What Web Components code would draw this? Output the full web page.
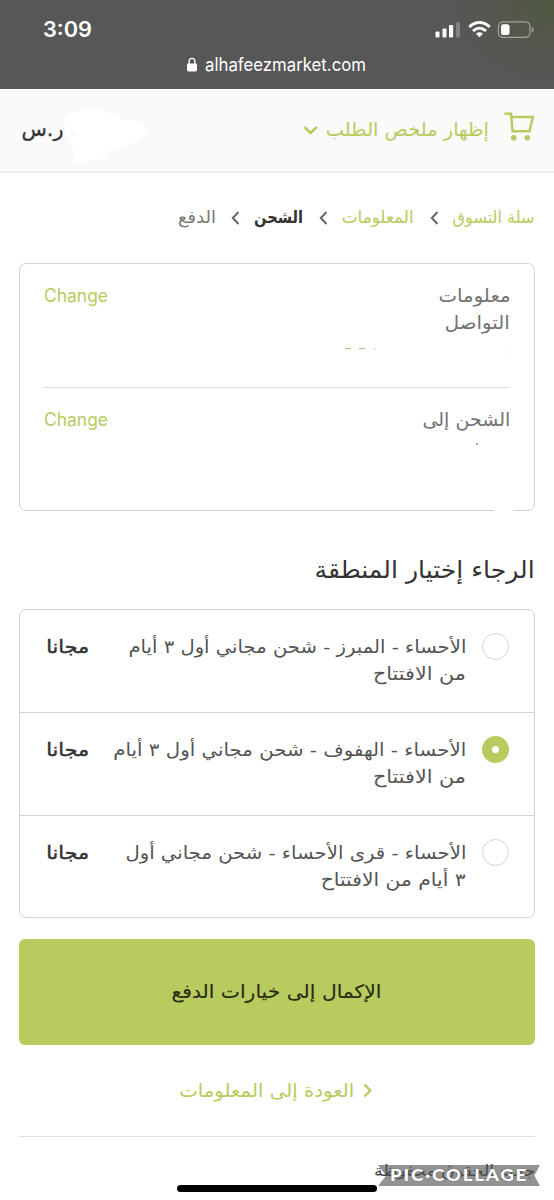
<!DOCTYPE html>
<html lang="ar" dir="rtl">
<head>
<meta charset="utf-8">
<title>الشحن</title>
<style>
html,body{margin:0;height:1200px;overflow:hidden;background:#fff}
body{font-family:"DejaVu Sans","Noto Sans",sans-serif;color:#555}
</style>
</head>
<body>
<checkout-page></checkout-page>
<script>
const define = (name, html, setup) => {
  const t = document.createElement('template');
  t.innerHTML = html;
  customElements.define(name, class extends HTMLElement {
    connectedCallback() {
      if (this.shadowRoot) return;
      this.attachShadow({mode:'open'}).append(t.content.cloneNode(true));
      if (setup) setup(this, this.shadowRoot);
    }
  });
};

/* One line of text condensed or widened to the width given in "w". */
define('fit-text', `<style>
:host{display:block;flex:none;white-space:nowrap;line-height:27px;height:27px}
span{display:inline-block;transform-origin:100% 50%}
:host([dir=ltr]) span{transform-origin:0 50%}
</style><span><slot></slot></span>`, (el, root) => {
  const w = +el.getAttribute('w');
  el.style.width = w + 'px';
  if (el.hasAttribute('size')) el.style.fontSize = el.getAttribute('size') + 'px';
  const s = root.querySelector('span');
  s.style.transform = 'scaleX(' + w / s.getBoundingClientRect().width + ')';
});

define('status-bar', `<style>
:host{display:block;height:88.5px;direction:ltr;color:#fff;font-family:Inter,sans-serif;
background:radial-gradient(ellipse 110px 90px at 100% 0,#50593f,#54574d 45%,#575757 100%)}
.top{display:flex;justify-content:space-between;align-items:center;padding:16px 18px 0 43px;height:27px}
.icons{display:block}
.url{display:flex;justify-content:center;align-items:center;gap:8px;height:27px;padding:8px 2px 0 0}
</style>
<div class="top"><fit-text dir="ltr" w="49" size="21.5" style="font-weight:600">3:09</fit-text>
<svg class="icons" width="101" height="20" viewBox="0 0 101 20"><g fill="#fff" transform="translate(0 -1)">
<rect x="0.500" y="12.500" width="4" height="6" rx="1"/><rect x="7.500" y="9.500" width="4" height="9" rx="1"/><rect x="14" y="6" width="4.200" height="12.500" rx="1"/><rect x="21" y="3" width="4" height="15.500" rx="1" opacity=".25"/></g>
<g transform="translate(0 -1)"><g fill="none" stroke="#fff" stroke-width="3"><path d="M34.300 8C40.500 1.900 48.500 1.900 54.700 8"/><path d="M38 12C42 8.300 47 8.300 51 12"/></g><path fill="#fff" d="M41 14.700Q44.500 11.900 48 14.700L44.500 18.300Z"/>
<rect x="63.500" y="2.800" width="31.500" height="15.500" rx="4.500" fill="none" stroke="#fff" stroke-opacity=".45" stroke-width="1.300"/><rect x="66" y="5.200" width="8.500" height="10.800" rx="2.300" fill="#fff"/><path fill="#fff" opacity=".45" d="M96.800 8v5.400q2-.8 2-2.700t-2-2.700z"/></g></svg></div>
<div class="url"><svg width="10" height="15" viewBox="0 0 10 15"><path d="M2.200 7V4.200a2.800 2.800 0 0 1 5.600 0V7" fill="none" stroke="#fff" stroke-width="1.400"/><rect y="6.400" width="10" height="8" rx="1.300" fill="#fff"/></svg>
<fit-text dir="ltr" w="161" size="18">alhafeezmarket.com</fit-text></div>`);

define('order-summary', `<style>
:host{display:flex;box-sizing:border-box;height:84.5px;align-items:flex-start;justify-content:space-between;background:#fafafa;border-bottom:2px solid #ececec;padding:23px 19px 0 21px}
.toggle{display:flex;color:#b8cb5e}
.cart{margin-inline-end:15px}
.chev{margin:13px 7px 0 0}
.total{display:flex;color:#333}
.smudge{margin-top:-5px}
</style>
<div class="toggle"><svg class="cart" width="31" height="30" viewBox="0 0 31 30"><g fill="none" stroke="#b8cb5e" stroke-width="2.500"><path d="M0.500 1.700H7L8.600 19.200H25.500L28.800 4.900H7.300"/></g><circle cx="9.700" cy="25.700" r="2.800" fill="#b8cb5e"/><circle cx="23.300" cy="25.700" r="2.800" fill="#b8cb5e"/></svg>
<fit-text w="163" size="19" style="margin-top:4px">إظهار ملخص الطلب</fit-text>
<svg class="chev" width="16" height="11" viewBox="0 0 16 11"><path d="M1.300 2 7.500 8 13.700 2" fill="none" stroke="#b8cb5e" stroke-width="2.500"/></svg></div>
<div class="total"><svg class="smudge" width="84" height="60" viewBox="0 0 84 60"><path fill="#fff" d="M2 14Q2 5 15 4Q32-2 47 6Q56 9 60 13Q82 11 83 23Q82 33 68 36L47 44Q42 51 34 53Q27 53 24 56Q12 60 10 49L9 34Q0 26 2 14Z"/><circle cx="9" cy="27" r=".7" fill="#ccc"/></svg>
<fit-text w="42" size="20" style="margin-top:4px;-webkit-text-stroke:.3px #333">ر.س</fit-text></div>`);

define('bread-crumbs', `<style>
:host{display:flex;color:#b8cb5e;padding:31px 19px 0 0;height:59px}
svg{margin-top:7px;flex:none}
.now{font-weight:700;color:#333}.next{color:#777}
</style>
<fit-text w="82" size="17">سلة التسوق</fit-text><svg style="margin-inline:14.5px 16px" width="9" height="14"><path d="M7.500 1 1.800 7l5.700 6" fill="none" stroke="#666" stroke-width="2"/></svg>
<fit-text w="72" size="17">المعلومات</fit-text><svg style="margin-inline:14px 15.5px" width="9" height="14"><path d="M7.500 1 1.800 7l5.700 6" fill="none" stroke="#666" stroke-width="2"/></svg>
<fit-text class="now" w="49" size="17">الشحن</fit-text><svg style="margin-inline:14.5px 14.5px" width="9" height="14"><path d="M7.500 1 1.800 7l5.700 6" fill="none" stroke="#666" stroke-width="2"/></svg>
<fit-text class="next" w="38" size="17">الدفع</fit-text>`);

define('review-row', `<style>
:host{display:flex;justify-content:space-between;box-sizing:border-box;height:124px;padding-top:18px;color:#737373}
.change{color:#b8cb5e;font-family:Inter,sans-serif}
</style><div><slot></slot></div><fit-text class="change" dir="ltr" w="64" size="18">Change</fit-text>`);

define('review-card', `<style>
:host{display:block;position:relative;box-sizing:border-box;margin:0 19px;height:248px;border:1px solid #d3d3d3;border-radius:7px;padding:0 24px}
.rule{border-bottom:1px solid #dcdcdc}
.erased{position:absolute;right:21px;bottom:-3px;width:19px;height:5px;border-radius:2px;background:#fff}
.dots{position:absolute;right:24px;top:82px}
</style>
<review-row class="rule"><fit-text w="72" size="18.5">معلومات</fit-text><fit-text w="65" size="18.5">التواصل</fit-text></review-row>
<review-row><fit-text w="88" size="18.5">الشحن إلى</fit-text></review-row>
<svg class="dots" width="170" height="100"><g fill="none" stroke-width="1.200"><path d="M5 3q3-1.500 6 0M19 3q3-1.500 6 0" stroke="#b5be7c"/><path d="M33 2.500h3" stroke="#ddd"/></g><circle cx="137" cy="98" r=".9" fill="#888"/><circle cx="168" cy="6" r=".5" fill="#ccc"/></svg>
<div class="erased"></div>`);

define('ship-option', `<style>
:host{display:flex;box-sizing:border-box;height:103px;padding:23px 25px 0 26px;border-bottom:1px solid #d3d3d3;color:#545454}
:host(:last-child){border-bottom:0}
i{box-sizing:border-box;flex:none;width:27px;height:27px;border:1.500px solid #d3d3d3;border-radius:50%;margin:0 0 0 16px}
:host([checked]) i{border:10.500px solid #b8cb5e;background:#fff}
.price{margin-inline-start:auto;color:#333;-webkit-text-stroke:.45px #333}
</style><i></i><div><slot></slot></div><fit-text class="price" w="43" size="18">مجانا</fit-text>`);

define('ship-options', `<style>
:host{display:block;box-sizing:border-box;margin:0 19px;height:309px;border:1px solid #d3d3d3;border-radius:7px}
</style><slot></slot>`);

define('pay-button', `<style>
:host{display:flex;justify-content:center;box-sizing:border-box;height:106px;margin:21px 19px 0;padding:39px 1px 0 0;border-radius:6px;background:#b8cb5e;color:#292d13}
</style><fit-text w="210" size="18.5" style="-webkit-text-stroke:.15px #292d13"><slot></slot></fit-text>`);

define('back-link', `<style>
:host{display:flex;justify-content:center;align-items:center;box-sizing:border-box;height:91px;color:#b8cb5e;gap:8px;padding-right:3px}
</style><svg width="9" height="15"><path d="M1.500 1.500 7.300 7.500l-5.800 6" fill="none" stroke="#b8cb5e" stroke-width="2.300"/></svg><fit-text w="175" size="18.5">العودة إلى المعلومات</fit-text>`);

define('page-footer', `<style>
:host{display:block;margin:0 19px;border-top:1px solid #dedede;padding-top:21px;color:#444}
</style><fit-text w="161" size="15.5">جميع الحقوق محفوظة</fit-text>`);

define('collage-mark', `<style>
:host{position:absolute;right:14px;top:1165px;width:162px;height:21px;direction:ltr;display:flex;align-items:center;justify-content:center;color:#fff;font-family:Lato,sans-serif;font-weight:900;background:rgba(80,80,80,.62);clip-path:polygon(0 0,100% 0,96.500% 50%,100% 100%,0 100%,5% 50%)}
</style><fit-text dir="ltr" w="138" size="16.5" style="letter-spacing:1.500px;text-shadow:0 0 1px #555">PIC·COLLAGE</fit-text>`);

define('home-bar', `<style>
:host{position:absolute;left:177px;top:1184.500px;width:200px;height:7.500px;border-radius:4px;background:#000}
</style>`);

define('checkout-page', `<style>
:host{display:block;position:relative;width:554px;height:1200px;overflow:hidden;background:#fff}
h2{margin:0;padding:46px 19px 0 0;height:52px;font-weight:400;color:#333}
</style>
<status-bar></status-bar>
<order-summary></order-summary>
<bread-crumbs></bread-crumbs>
<review-card></review-card>
<h2><fit-text w="220" size="24">الرجاء إختيار المنطقة</fit-text></h2>
<ship-options>
<ship-option><fit-text w="338" size="18">الأحساء - المبرز - شحن مجاني أول ٣ أيام</fit-text><fit-text w="93" size="18">من الافتتاح</fit-text></ship-option>
<ship-option checked><fit-text w="353" size="18">الأحساء - الهفوف - شحن مجاني أول ٣ أيام</fit-text><fit-text w="93" size="18">من الافتتاح</fit-text></ship-option>
<ship-option><fit-text w="341" size="18">الأحساء - قرى الأحساء - شحن مجاني أول</fit-text><fit-text w="145" size="18">٣ أيام من الافتتاح</fit-text></ship-option>
</ship-options>
<pay-button>الإكمال إلى خيارات الدفع</pay-button>
<back-link></back-link>
<page-footer></page-footer>
<collage-mark></collage-mark>
<home-bar></home-bar>`);
</script>
</body>
</html>
